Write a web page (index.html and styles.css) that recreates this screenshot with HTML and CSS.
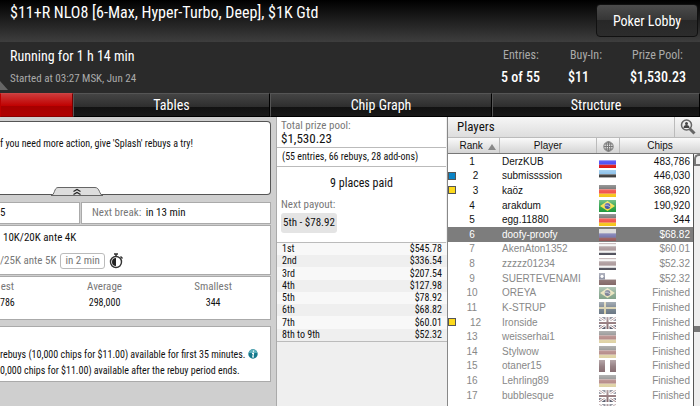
FILE: index.html
```
<!DOCTYPE html>
<html lang="en">
<head>
    <meta charset="UTF-8">
    <meta name="viewport" content="width=device-width, initial-scale=1.0">
    <title>Tournament Lobby</title>
    <link rel="stylesheet" href="styles.css">
</head>
<body>
    <svg class="sprite" aria-hidden="true">
        <defs>
            <linearGradient id="gloss" x1="0" y1="0" x2="0" y2="1">
                <stop offset="0" stop-color="#fff" stop-opacity="0.4"/>
                <stop offset="0.5" stop-color="#fff" stop-opacity="0.15"/>
                <stop offset="1" stop-color="#fff" stop-opacity="0"/>
            </linearGradient>
            <symbol id="ru" viewBox="0 0 17 11"><path fill="#fff" d="M0 0h17v4H0z"/><path fill="#3c3cf5" d="M0 4h17v4H0z"/><path fill="#e01818" d="M0 8h17v3H0z"/></symbol>
            <symbol id="ee" viewBox="0 0 17 11"><path fill="#6cb0e4" d="M0 0h17v4H0z"/><path fill="#222" d="M0 4h17v3H0z"/><path fill="#fff" d="M0 7h17v4H0z"/></symbol>
            <symbol id="de" viewBox="0 0 17 11"><path fill="#555" d="M0 0h17v4H0z"/><path fill="#f04038" d="M0 4h17v4H0z"/><path fill="#f5c518" d="M0 8h17v3H0z"/></symbol>
            <symbol id="br" viewBox="0 0 17 11"><path fill="#1d9a3c" d="M0 0h17v11H0z"/><path fill="#f3dc3c" d="M8.500 1L16 5.500 8.500 10 1 5.500z"/><circle cx="8.500" cy="5.500" r="2.800" fill="#34479c"/><path d="M6 4.800q3-.5 5 1.500" stroke="#ccd" stroke-width=".7" fill="none"/></symbol>
            <symbol id="th" viewBox="0 0 17 11"><path fill="#eee" d="M0 0h17v11H0z"/><path fill="#b06870" d="M0 0h17v1H0z"/><path fill="#a85c64" d="M0 3h17v4H0z"/><path fill="#151540" d="M0 9h17v2H0z"/></symbol>
            <symbol id="cl" viewBox="0 0 17 11"><path fill="#fff" d="M0 0h17v6H0z"/><path fill="#902828" d="M0 6h17v5H0z"/><path fill="#4858a0" d="M0 0h6v6H0z"/><circle cx="3" cy="3" r="1.500" fill="#fff"/></symbol>
            <symbol id="se" viewBox="0 0 17 11"><path fill="#1c5080" d="M0 0h17v11H0z"/><path fill="#e0c030" d="M5 0h2v11H5zM0 4.500h17v2H0z"/></symbol>
            <symbol id="pe" viewBox="0 0 17 11"><path fill="#903040" d="M0 0h17v11H0z"/><path fill="#fff" d="M6 0h5v11H6z"/></symbol>
            <symbol id="gb" viewBox="0 0 17 11"><path fill="#182868" d="M0 0h17v11H0z"/><path d="M0 0l17 11M17 0L0 11" stroke="#fff" stroke-width="2.600"/><path d="M0 0l17 11M17 0L0 11" stroke="#b02030" stroke-width=".8"/><path d="M8.500 0v11M0 5.500h17" stroke="#fff" stroke-width="4"/><path d="M8.500 0v11M0 5.500h17" stroke="#982838" stroke-width="2"/></symbol>
        </defs>
    </svg>

    <div class="lobby">
        <header class="title-bar">
            <h1>$11+R NLO8 [6-Max, Hyper-Turbo, Deep], $1K Gtd</h1>
            <button class="lobby-btn" type="button">Poker Lobby</button>
        </header>

        <section class="summary">
            <span class="fold"></span>
            <div class="running">
                <p class="big">Running for 1 h 14 min</p>
                <p class="dim">Started at 03:27 MSK, Jun 24</p>
            </div>
            <dl class="facts">
                <div><dt>Entries:</dt><dd>5 of 55</dd></div>
                <div><dt>Buy-In:</dt><dd>$11</dd></div>
                <div><dt>Prize Pool:</dt><dd>$1,530.23</dd></div>
            </dl>
        </section>

        <nav class="tabs">
            <a class="active" href="#home" aria-label="Home"></a>
            <a href="#tables">Tables</a>
            <a href="#graph">Chip Graph</a>
            <a href="#structure">Structure</a>
        </nav>

        <main class="content">
            <section class="details">
                <div class="note">
                    <p>f you need more action, give 'Splash' rebuys a try!</p>
                    <button class="collapse" type="button" aria-label="Collapse">
                        <svg width="52" height="9" viewBox="0 0 52 9">
                            <path d="M0 8.500C4 8 3 .5 7 .5h37c5 0 4 7.500 8 8z" fill="#ddd" stroke="#666"/>
                            <path d="M22.500 4.500l3.500-2 3.500 2M22.500 7.500l3.500-2 3.500 2" fill="none" stroke="#222" stroke-width="1.200"/>
                        </svg>
                    </button>
                </div>
                <div class="break-row">
                    <div class="panel">5</div>
                    <div class="panel next-break"><span class="gray">Next break:</span> in 13 min</div>
                </div>
                <div class="panel levels">
                    <p class="level-now">10K/20K ante 4K</p>
                    <p class="level-next gray">/25K ante 5K <span class="in-time">in 2 min</span>
                        <svg width="15" height="16" viewBox="0 0 15 16">
                            <circle cx="7" cy="9" r="5.500" fill="#fff" stroke="#333" stroke-width="1.400"/>
                            <path d="M7 5a4 4 0 0 0 0 8z" fill="#222"/>
                            <path d="M5 1h4M7 1v3M11.500 3.500l2 2" stroke="#333" stroke-width="1.500"/>
                        </svg>
                    </p>
                </div>
                <dl class="panel stacks">
                    <div><dt>est</dt><dd>786</dd></div>
                    <div><dt>Average</dt><dd>298,000</dd></div>
                    <div><dt>Smallest</dt><dd>344</dd></div>
                </dl>
                <div class="panel rebuys">
                    <p>rebuys (10,000 chips for $11.00) available for first 35 minutes.
                        <svg width="10" height="10" viewBox="0 0 10 10">
                            <circle cx="5" cy="5" r="4.700" fill="#14788c"/>
                            <path d="M1 4a4 3.500 0 0 1 8 0z" fill="#5ab0bc"/>
                            <path d="M5.500 1.500v1.300M4 4.300h1.500L4.800 8H6" stroke="#fff" stroke-width="1.200" fill="none"/>
                        </svg>
                    </p>
                    <p>0,000 chips for $11.00) available after the rebuy period ends.</p>
                </div>
            </section>

            <section class="prizes">
                <div class="pool">
                    <p class="gray">Total prize pool:</p>
                    <p class="amount">$1,530.23</p>
                </div>
                <p class="counts">(55 entries, 66 rebuys, 28 add-ons)</p>
                <div class="payout">
                    <p class="places">9 places paid</p>
                    <p class="gray">Next payout:</p>
                    <span class="next-prize">5th - $78.92</span>
                </div>
                <table class="prize-table">
                    <tbody>
                        <tr><td>1st</td><td>$545.78</td></tr>
                        <tr><td>2nd</td><td>$336.54</td></tr>
                        <tr><td>3rd</td><td>$207.54</td></tr>
                        <tr><td>4th</td><td>$127.98</td></tr>
                        <tr><td>5th</td><td>$78.92</td></tr>
                        <tr><td>6th</td><td>$68.82</td></tr>
                        <tr><td>7th</td><td>$60.01</td></tr>
                        <tr><td>8th to 9th</td><td>$52.32</td></tr>
                    </tbody>
                </table>
            </section>

            <section class="players">
                <div class="players-head">
                    <h2>Players</h2>
                    <button class="find" type="button" aria-label="Find a player">
                        <svg width="16" height="16" viewBox="0 0 16 16">
                            <path d="M9.500 9.500l5 5" stroke="#666" stroke-width="3"/>
                            <circle cx="6.500" cy="6" r="5" fill="#eee" stroke="#666" stroke-width="1.500"/>
                            <circle cx="6.500" cy="4.500" r="1.500" fill="#444"/>
                            <path d="M3.500 9q0-3 3-3t3 3z" fill="#444"/>
                        </svg>
                    </button>
                </div>
                <div class="columns">
                    <span>Rank <svg width="8" height="6" viewBox="0 0 8 6"><path d="M4 0l4 6H0z" fill="#888"/></svg></span>
                    <span>Player</span>
                    <span>
                        <svg width="11" height="11" viewBox="0 0 11 11" fill="none" stroke="#777">
                            <circle cx="5.500" cy="5.500" r="4.700"/>
                            <ellipse cx="5.500" cy="5.500" rx="2.300" ry="4.700"/>
                            <path d="M1 5.500h9M5.500 1v9M1.500 3h8M1.500 8h8"/>
                        </svg>
                    </span>
                    <span>Chips</span>
                </div>
                <div class="list">
                    <table class="player-table">
                        <colgroup><col class="c-rank"><col class="c-name"><col class="c-flag"><col></colgroup>
                        <tbody id="rows"></tbody>
                    </table>
                    <div class="scroll"><span class="knob"></span><span class="grip"></span></div>
                </div>
            </section>
        </main>
    </div>

    <script>
        const players = [
            [1, 'DerzKUB', 'ru', '483,786'],
            [2, 'submissssion', 'ee', '446,030', 'blue'],
            [3, 'kaöz', 'de', '368,920', 'yellow'],
            [4, 'arakdum', 'br', '190,920'],
            [5, 'egg.11880', 'de', '344'],
            [6, 'doofy-proofy', 'ru', '$68.82'],
            [7, 'AkenAton1352', 'th', '$60.01'],
            [8, 'zzzzz01234', 'th', '$52.32'],
            [9, 'SUERTEVENAMI', 'cl', '$52.32'],
            [10, 'OREYA', 'br', 'Finished'],
            [11, 'K-STRUP', 'se', 'Finished'],
            [12, 'Ironside', 'gb', 'Finished', 'yellow'],
            [13, 'weisserhai1', 'de', 'Finished'],
            [14, 'Stylwow', 'de', 'Finished'],
            [15, 'otaner15', 'pe', 'Finished'],
            [16, 'Lehrling89', 'de', 'Finished'],
            [17, 'bubblesque', 'gb', 'Finished'],
            ['', '', 'gb', '']
        ];

        document.getElementById('rows').innerHTML = players.map(([rank, name, flag, chips, mark], i) => {
            const state = i === 5 ? 'out selected' : i > 5 ? 'out' : '';
            const tag = mark ? `<i class="mark ${mark}"></i>` : '';
            return `<tr class="${state}">
                <td class="${mark ? 'marked' : ''}">${tag}${rank}</td>
                <td>${name}</td>
                <td><svg class="flag" viewBox="0 0 17 11" preserveAspectRatio="none"><use href="#${flag}" width="17" height="11"/><rect width="17" height="11" fill="url(#gloss)"/></svg></td>
                <td>${chips}</td>
            </tr>`;
        }).join('');
    </script>
</body>
</html>
```
FILE: styles.css
```
* {
    box-sizing: border-box;
}

body {
    margin: 0;
    font-family: "Roboto Condensed", "Arial Narrow", Roboto, sans-serif;
    font-size: 10px;
    line-height: 12px;
    color: #111;
    background: #cfcfcf;
}

h1, h2, p, dl, dd {
    margin: 0;
    font-weight: normal;
}

button {
    font-family: inherit;
    cursor: pointer;
}

.sprite {
    position: absolute;
    width: 0;
    height: 0;
}

.gray {
    color: #777;
}

.lobby {
    display: flex;
    flex-direction: column;
    height: 100vh;
    overflow: hidden;
}

/* Top bars */
.title-bar {
    display: flex;
    justify-content: space-between;
    height: 42px;
    padding: 4px 2px 4px 10px;
    background: linear-gradient(#000, #3e3e3e);
}

.title-bar h1 {
    font-size: 16px;
    line-height: 18px;
    color: #fff;
}

.lobby-btn {
    width: 102px;
    height: 33px;
    border: 1px solid #111;
    border-radius: 4px;
    background: linear-gradient(#4c4c4c, #353535 50%, #272727 50%, #2c2c2c);
    color: #fff;
    font-size: 14px;
}

.summary {
    position: relative;
    display: flex;
    justify-content: space-between;
    height: 51px;
    padding: 5px 14px 0 10px;
    background: #2a2a2a;
    color: #fff;
}

.fold {
    position: absolute;
    left: 0;
    bottom: 3px;
    border-left: 8px solid #666;
    border-top: 9px solid transparent;
}

.big {
    font-size: 14px;
    line-height: 18px;
}

.dim {
    margin-top: 8px;
    font-size: 11px;
    color: #aaa;
}

.facts {
    display: flex;
    gap: 28px;
}

.facts dt {
    padding: 2px 0 0 2px;
    font-size: 12px;
    color: #aaa;
}

.facts dd {
    margin-top: 7px;
    font-size: 14px;
    line-height: 18px;
    font-weight: 500;
}

.tabs {
    display: grid;
    grid-template-columns: 73fr 197fr 222fr 208fr;
    height: 24px;
    background: #111;
}

.tabs a {
    border-top: 1px solid #555;
    border-left: 1px solid #555;
    border-right: 1px solid #000;
    border-bottom: 1px solid #000;
    background: linear-gradient(#444, #2e2e2e 58%, #111 58%, #191919);
    color: #fff;
    font-size: 14px;
    line-height: 22px;
    text-align: center;
    text-decoration: none;
}

.tabs .active {
    border-color: #c44 #700 #800 #b00;
    background: linear-gradient(#cc3a3a, #c00000 55%, #a60000 55%, #b00000);
}

.content {
    display: grid;
    grid-template-columns: minmax(0, 277fr) minmax(0, 170fr) minmax(0, 253fr);
    flex: 1;
    min-height: 0;
}

/* Left column */
.details {
    padding: 4px 5px 0 0;
    border-right: 1px solid #aaa;
    overflow: hidden;
    white-space: nowrap;
}

.note {
    position: relative;
    height: 74px;
    padding-top: 16px;
    background: #fff;
    border: 1px solid #555;
    border-left: 0;
    border-radius: 0 4px 4px 0;
}

.collapse {
    position: absolute;
    left: 51px;
    bottom: -2px;
    padding: 0;
    border: 0;
    background: none;
}

.collapse svg {
    display: block;
}

.panel {
    background: #fff;
    border: 1px solid #aaa;
    border-left: 0;
}

.break-row {
    display: grid;
    grid-template-columns: 80fr 190fr;
    gap: 1px;
    margin: 7px 0 1px;
    font-size: 11px;
    line-height: 20px;
}

.next-break {
    padding-left: 10px;
    border-left: 1px solid #aaa;
}

.next-break .gray {
    margin-right: 2px;
}

.levels {
    height: 50px;
    padding-top: 5px;
    font-size: 11px;
}

.level-now {
    padding-left: 3px;
    font-size: 11px;
    line-height: 14px;
}

.level-next {
    display: flex;
    align-items: center;
    gap: 4px;
    margin-top: 8px;
    line-height: 14px;
}

.in-time {
    padding: 0 4px;
    border: 1px solid #bbb;
    border-radius: 3px;
}

.stacks {
    display: flex;
    justify-content: space-between;
    height: 44px;
    margin-top: 1px;
    padding: 4px 38px 0 0;
    text-align: center;
}

.stacks dt {
    font-size: 11px;
    color: #777;
}

.stacks dd {
    margin-top: 4px;
}

.rebuys {
    height: 56px;
    margin-top: 6px;
    padding-top: 22px;
}

.rebuys p {
    height: 16px;
}

.rebuys svg {
    vertical-align: -1px;
}

/* Middle column */
.prizes {
    background: #efefef;
    white-space: nowrap;
}

.pool, .counts, .payout {
    margin-right: 1px;
    background: #fff;
    border-bottom: 1px solid #bbb;
}

.pool {
    height: 31px;
    padding: 3px 4px 0;
    font-size: 11px;
}

.amount {
    font-size: 13px;
    line-height: 14px;
}

.counts {
    height: 19px;
    padding: 3px 5px 0;
}

.payout {
    height: 76px;
    padding: 9px 4px 0;
    font-size: 11px;
}

.places {
    margin-bottom: 9px;
    font-size: 12px;
    line-height: 14px;
    text-align: center;
}

.next-prize {
    display: inline-block;
    margin-top: 2px;
    padding: 3px 2px;
    border-radius: 3px;
    background: #e4e4e4;
    font-size: 11px;
    line-height: 14px;
}

.prize-table {
    width: 100%;
    height: 99px;
    border-collapse: collapse;
    border-bottom: 1px solid #bbb;
}

.prize-table tr:nth-child(odd) {
    background: #f8f8f8;
}

.prize-table td {
    padding: 0 5px;
}

.prize-table td:last-child {
    text-align: right;
}

/* Players */
.players {
    display: flex;
    flex-direction: column;
    min-height: 0;
    border-left: 1px solid #888;
    background: #fff;
}

.players-head {
    display: flex;
    justify-content: space-between;
    height: 20px;
    background: linear-gradient(#f6f6f6, #ddd);
}

.players-head h2 {
    padding-left: 9px;
    font-size: 13px;
    line-height: 20px;
}

.find {
    width: 26px;
    padding: 2px 0 0;
    border: 0;
    border-left: 1px solid #bbb;
    background: none;
}

.columns {
    display: grid;
    grid-template-columns: 51fr 97fr 23fr 81fr;
    height: 17px;
    border-top: 1px solid #bbb;
    border-bottom: 1px solid #777;
    background: linear-gradient(#fafafa, #d4d4d4);
    font-family: "Liberation Sans", Arial, sans-serif;
    font-size: 10px;
    line-height: 15px;
    text-align: center;
}

.columns span + span {
    border-left: 1px solid #bbb;
}

.columns span:first-child {
    padding-left: 8px;
}

.columns span:first-child svg {
    margin-left: 2px;
    vertical-align: -1px;
}

.columns span:nth-child(3) svg {
    vertical-align: middle;
}

.list {
    display: flex;
    flex: 1;
    min-height: 0;
    overflow: hidden;
}

.player-table {
    flex: 1;
    height: 263px;
    border-collapse: collapse;
    table-layout: fixed;
    font-family: "Liberation Sans", Arial, sans-serif;
    font-size: 10px;
}

.c-rank {
    width: 51px;
}

.c-name {
    width: 97px;
}

.c-flag {
    width: 23px;
}

.player-table td {
    position: relative;
    padding: 1px 0 0;
    white-space: nowrap;
}

.player-table td:nth-child(1) {
    padding-right: 3px;
    text-align: center;
}

.player-table td.marked {
    padding-left: 7px;
}

.player-table td:nth-child(2) {
    padding-left: 3px;
}

.player-table td:nth-child(4) {
    padding-right: 3px;
    text-align: right;
}

.out {
    color: #888;
}

.selected {
    background: #7d7d7d;
    color: #fff;
}

.flag {
    display: block;
    width: 17px;
    height: 12px;
    margin: 0 auto;
}

.out .flag {
    filter: saturate(0.35);
    opacity: 0.75;
}

.selected .flag {
    filter: saturate(0.3) brightness(1.4);
}

.mark {
    position: absolute;
    left: 0;
    top: 3px;
    width: 8px;
    height: 8px;
    border: 1px solid #555;
}

.blue {
    background: #0a84c6;
}

.yellow {
    background: #fcd91c;
}

.scroll {
    display: flex;
    flex-direction: column;
    justify-content: space-between;
    width: 7px;
    padding-bottom: 74px;
    border-left: 1px solid #555;
    background: #eee;
}

.knob {
    height: 12px;
    border: 2px solid #777;
    border-right: 0;
    border-radius: 5px 0 0 0;
}

.grip {
    height: 6px;
    background: #777;
}
```
